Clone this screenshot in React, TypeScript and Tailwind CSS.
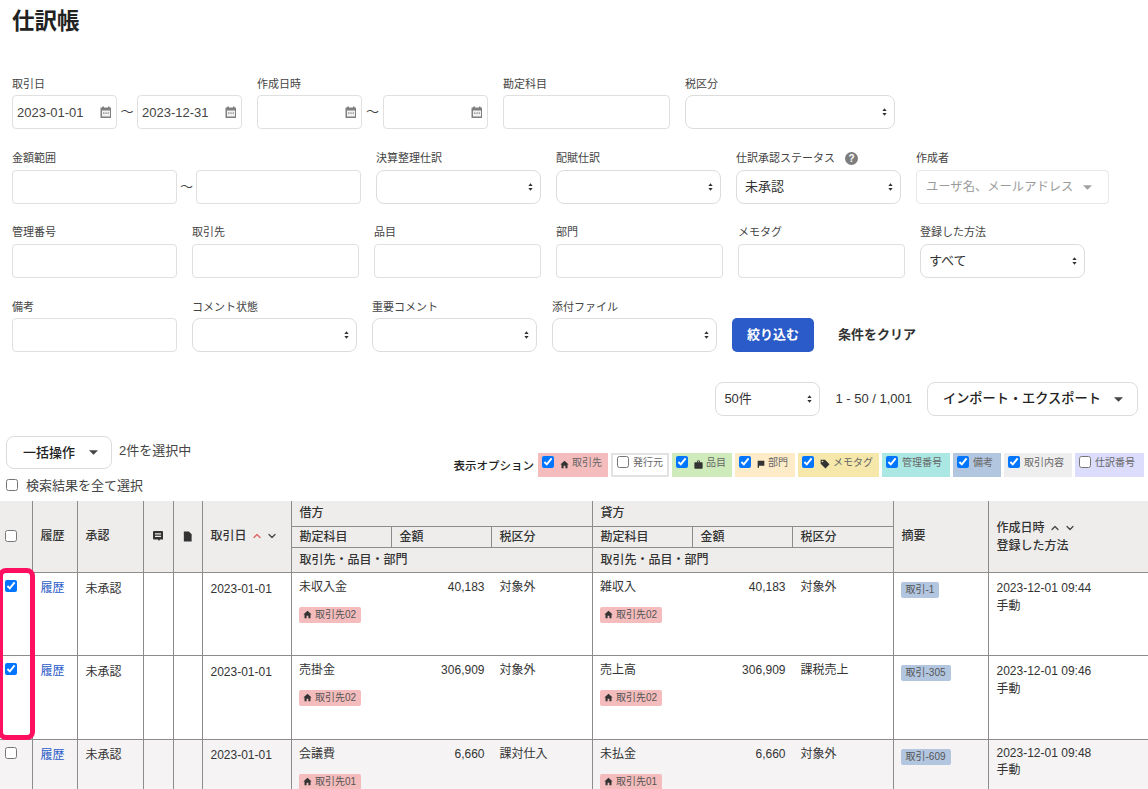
import React from "react";
import { ChevronDown, ChevronUp } from "lucide-react";

const Arrows = () => (
  <svg viewBox="0 0 6 10" className="absolute right-[8px] top-1/2 -translate-y-1/2 w-[5px] h-[9px] pointer-events-none">
    <path d="M3 0.5L5.6 3.8H0.4Z M3 9.5L0.4 6.2H5.6Z" fill="#333" />
  </svg>
);

const Caret = ({ c = "#444" }: { c?: string }) => (
  <svg viewBox="0 0 10 5" className="w-[9px] h-[5px] shrink-0"><path d="M0 0H10L5 5Z" fill={c} /></svg>
);

const Cal = () => (
  <svg viewBox="0 0 12 12" className="absolute right-[5px] top-1/2 -translate-y-1/2 w-[12px] h-[12px] pointer-events-none">
    <path d="M2.5 0.5h1.5v1h4v-1h1.5v1h1a.5.5 0 0 1 .5.5v9.5a.5.5 0 0 1-.5.5h-9.5a.5.5 0 0 1-.5-.5V2a.5.5 0 0 1 .5-.5h1z" fill="#7f7f7f" />
    <rect x="2" y="4.5" width="8" height="6" fill="#f1f1f1" />
    <rect x="3" y="6.5" width="1.4" height="1.2" fill="#7f7f7f" />
    <rect x="5.3" y="6.5" width="1.4" height="1.2" fill="#7f7f7f" />
    <rect x="7.6" y="6.5" width="1.4" height="1.2" fill="#7f7f7f" />
  </svg>
);

const Home = () => (
  <svg viewBox="0 0 12 12" className="w-[9px] h-[9px] shrink-0"><path d="M6 1L11.5 6H10V11H7.2V7.8H4.8V11H2V6H.5Z" fill="#333" /></svg>
);
const Bag = () => (
  <svg viewBox="0 0 12 12" className="w-[9px] h-[9px] shrink-0"><path d="M4 3V1.5A1 1 0 0 1 5 .5H7A1 1 0 0 1 8 1.5V3H10.5A1 1 0 0 1 11.5 4V10.5A1 1 0 0 1 10.5 11.5H1.5A1 1 0 0 1 .5 10.5V4A1 1 0 0 1 1.5 3ZM5 3H7V1.5H5Z" fill="#333" fillRule="evenodd" /></svg>
);
const Flag = () => (
  <svg viewBox="0 0 12 12" className="w-[8px] h-[8px] shrink-0"><path d="M1 1H11V8.5H3V11.5H1Z" fill="#333" /></svg>
);
const TagI = () => (
  <svg viewBox="0 0 12 12" className="w-[10px] h-[10px] shrink-0"><path d="M.8.8H6L11.4 6.4 6.6 11.4.8 5.8ZM3 2A1 1 0 1 0 3 4 1 1 0 0 0 3 2Z" fill="#333" fillRule="evenodd" /></svg>
);

const Label = ({ text, h }: { text: React.ReactNode; h: string }) => (
  <div className={`${h} text-[11px] leading-[16px] text-[#444] whitespace-nowrap flex items-start`}>{text}</div>
);

const Input = ({ w, value, date }: { w: string; value?: string; date?: boolean }) => (
  <div className={`relative ${w} h-[34px] shrink-0`}>
    <input
      readOnly
      value={value ?? ""}
      className="w-full h-full border border-[#e0e0e0] rounded-[4px] bg-white pl-[4px] text-[13px] text-[#444] outline-none"
    />
    {date && <Cal />}
  </div>
);

const Select = ({ w, value }: { w: string; value?: string }) => (
  <div className={`relative ${w} h-[34px] shrink-0`}>
    <select
      defaultValue={value ?? ""}
      className="appearance-none w-full h-full border border-[#dcdcdc] rounded-[8px] bg-white pl-[8px] text-[13px] text-[#333] outline-none"
    >
      <option value={value ?? ""}>{value ?? ""}</option>
    </select>
    <Arrows />
  </div>
);

const Tilde = ({ w }: { w: string }) => (
  <span className={`${w} shrink-0 text-center text-[13px] leading-[34px] text-[#444]`}>～</span>
);

const Field = ({ w, label, h, children }: { w: string; label: React.ReactNode; h: string; children: React.ReactNode }) => (
  <div className={`${w} shrink-0`}>
    <Label text={label} h={h} />
    <div className="flex items-start">{children}</div>
  </div>
);

const Chip = ({ bg, checked, icon, text, w }: { bg: string; checked: boolean; icon?: React.ReactNode; text: string; w: string }) => (
  <label className={`${bg} ${w} h-[24px] flex items-center pl-[4px] text-[10px] text-[#666] whitespace-nowrap`}>
    <input type="checkbox" readOnly checked={checked} className="w-[12px] h-[12px] -mt-[6px] mr-[4px] shrink-0" />
    {icon && <span className="mr-[3px] ml-[2px] -mt-[2px] flex">{icon}</span>}
    <span className="-mt-[6px]">{text}</span>
  </label>
);

const PartnerTag = ({ text }: { text: string }) => (
  <span className="inline-flex items-center gap-[3px] h-[16px] px-[4.5px] rounded-[2px] bg-[#f4bcbc] text-[10px] text-[#555] whitespace-nowrap">
    <Home />
    {text}
  </span>
);

const Side = ({ name, amount, tax, tag }: { name: string; amount: string; tax: string; tag: string }) => (
  <td colSpan={3} className="border-l border-t border-[#8c8c8c] align-top p-0">
    <div className="grid grid-cols-[100px_100px_1fr] pt-[6px] leading-[16px]">
      <span className="pl-[7.5px]">{name}</span>
      <span className="text-right pr-[7px]">{amount}</span>
      <span className="pl-[8px]">{tax}</span>
    </div>
    <div className="pl-[7px] mt-[12px] flex"><PartnerTag text={tag} /></div>
  </td>
);

type Row = {
  checked: boolean;
  bg: string;
  h: string;
  top: string;
  at2: string;
  d: [string, string, string, string];
  c: [string, string, string, string];
  memo: string;
  at: string;
};

const rows: Row[] = [
  { checked: true, bg: "bg-white", h: "h-[83px]", top: "pt-[8px]", at2: "pt-[6px] leading-[18px]", d: ["未収入金", "40,183", "対象外", "取引先02"], c: ["雑収入", "40,183", "対象外", "取引先02"], memo: "取引-1", at: "2023-12-01 09:44" },
  { checked: true, bg: "bg-white", h: "h-[84px]", top: "pt-[8px]", at2: "pt-[6px] leading-[18px]", d: ["売掛金", "306,909", "対象外", "取引先02"], c: ["売上高", "306,909", "課税売上", "取引先02"], memo: "取引-305", at: "2023-12-01 09:46" },
  { checked: false, bg: "bg-[#f5f3f4]", h: "h-[84px]", top: "pt-[7px]", at2: "pt-[5px] leading-[17px]", d: ["会議費", "6,660", "課対仕入", "取引先01"], c: ["未払金", "6,660", "対象外", "取引先01"], memo: "取引-609", at: "2023-12-01 09:48" },
];

const th = "border-l border-[#8c8c8c] font-medium text-left px-[8px] align-middle";

export default function App() {
  return (
    <div className="relative w-[1148px] h-[789px] overflow-hidden bg-white text-[12px] text-[#333] [font-family:'Liberation_Sans','Noto_Sans_CJK_JP',sans-serif]">
      <h1 className="pl-[12px] pt-[6px] h-[76px] text-[22.5px] leading-[32px] font-bold text-[#222]">仕訳帳</h1>

      <div className="flex pl-[12px]">
        <Field w="w-[245px]" h="h-[19px]" label="取引日">
          <Input w="w-[105px]" value="2023-01-01" date />
          <Tilde w="w-[20px]" />
          <Input w="w-[105px]" value="2023-12-31" date />
        </Field>
        <Field w="w-[246px]" h="h-[19px]" label="作成日時">
          <Input w="w-[105px]" date />
          <Tilde w="w-[21px]" />
          <Input w="w-[105px]" date />
        </Field>
        <Field w="w-[182px]" h="h-[19px]" label="勘定科目"><Input w="w-[167px]" /></Field>
        <Field w="w-[210px]" h="h-[19px]" label="税区分"><Select w="w-[210px]" /></Field>
      </div>

      <div className="flex pl-[12px] mt-[21px]">
        <Field w="w-[364px]" h="h-[20px]" label="金額範囲">
          <Input w="w-[165px]" />
          <Tilde w="w-[19px]" />
          <Input w="w-[165px]" />
        </Field>
        <Field w="w-[180px]" h="h-[20px]" label="決算整理仕訳"><Select w="w-[165px]" /></Field>
        <Field w="w-[180px]" h="h-[20px]" label="配賦仕訳"><Select w="w-[165px]" /></Field>
        <Field
          w="w-[180px]"
          h="h-[20px]"
          label={
            <span className="flex items-center gap-[10px]">
              仕訳承認ステータス
              <span className="w-[13px] h-[13px] rounded-full bg-[#7d7d7d] text-white text-[10px] leading-[13px] font-bold text-center">?</span>
            </span>
          }
        >
          <Select w="w-[165px]" value="未承認" />
        </Field>
        <Field w="w-[193px]" h="h-[20px]" label="作成者">
          <div className="w-[193px] h-[34px] border border-[#e8e8e8] rounded-[4px] flex items-center pl-[9px] gap-[10px] text-[12.3px] text-[#9a9a9a] whitespace-nowrap">
            ユーザ名、メールアドレス
            <Caret c="#a0a0a0" />
          </div>
        </Field>
      </div>

      <div className="flex pl-[12px] mt-[19px]">
        <Field w="w-[180px]" h="h-[21px] pt-[1px]" label="管理番号"><Input w="w-[165px]" /></Field>
        <Field w="w-[182px]" h="h-[21px] pt-[1px]" label="取引先"><Input w="w-[167px]" /></Field>
        <Field w="w-[182px]" h="h-[21px] pt-[1px]" label="品目"><Input w="w-[167px]" /></Field>
        <Field w="w-[182px]" h="h-[21px] pt-[1px]" label="部門"><Input w="w-[167px]" /></Field>
        <Field w="w-[182px]" h="h-[21px] pt-[1px]" label="メモタグ"><Input w="w-[167px]" /></Field>
        <Field w="w-[165px]" h="h-[21px] pt-[1px]" label="登録した方法"><Select w="w-[165px]" value="すべて" /></Field>
      </div>

      <div className="flex pl-[12px] mt-[21px] items-end">
        <Field w="w-[180px]" h="h-[19px]" label="備考"><Input w="w-[165px]" /></Field>
        <Field w="w-[180px]" h="h-[19px]" label="コメント状態"><Select w="w-[165px]" /></Field>
        <Field w="w-[180px]" h="h-[19px]" label="重要コメント"><Select w="w-[165px]" /></Field>
        <Field w="w-[180px]" h="h-[19px]" label="添付ファイル"><Select w="w-[165px]" /></Field>
        <button className="w-[82px] h-[34px] rounded-[5px] bg-[#2a5bc8] text-white text-[13px] font-bold">絞り込む</button>
        <button className="ml-[24px] h-[34px] text-[13px] font-bold text-[#333]">条件をクリア</button>
      </div>

      <div className="flex justify-end items-center mt-[30px] pr-[10px]">
        <Select w="w-[105px]" value="50件" />
        <span className="ml-[15px] mr-[15px] text-[13px] text-[#333]">1 - 50 / 1,001</span>
        <button className="w-[211px] h-[34px] border border-[#dcdcdc] rounded-[8px] bg-white flex items-center pl-[15px] gap-[13px] text-[13.2px] font-medium text-[#222] whitespace-nowrap">
          インポート・エクスポート
          <Caret />
        </button>
      </div>

      <div className="flex justify-between h-[65px] mt-[20px] pl-[6px] pr-[4px]">
        <div>
          <div className="flex items-center">
            <button className="w-[106px] h-[33px] border border-[#dcdcdc] rounded-[8px] bg-white flex items-center pl-[16px] gap-[14px] text-[13px] font-medium text-[#222]">
              一括操作
              <Caret />
            </button>
            <span className="ml-[7px] -mt-[3px] text-[13px] text-[#444]">2件を選択中</span>
          </div>
          <label className="flex items-center mt-[9px] h-[16px] text-[13px] text-[#444]">
            <input type="checkbox" readOnly className="w-[12px] h-[12px] mr-[8px] -mt-[3px]" />
            検索結果を全て選択
          </label>
        </div>
        <div className="flex items-center h-[24px] mt-[17px] gap-[3px]">
          <span className="text-[11.5px] font-medium text-[#222] mr-[1px] mt-[3px] whitespace-nowrap">表示オプション</span>
          <Chip bg="bg-[#f4bcbc]" w="w-[70px]" checked icon={<Home />} text="取引先" />
          <Chip bg="bg-white border-2 border-[#e2e2e2]" w="w-[58px]" checked={false} text="発行元" />
          <Chip bg="bg-[#d0ebbb]" w="w-[60px]" checked icon={<Bag />} text="品目" />
          <Chip bg="bg-[#feebc8]" w="w-[60px]" checked icon={<Flag />} text="部門" />
          <Chip bg="bg-[#f5e8aa]" w="w-[81px]" checked icon={<TagI />} text="メモタグ" />
          <Chip bg="bg-[#abe7e3]" w="w-[68px]" checked text="管理番号" />
          <Chip bg="bg-[#b3c6e0]" w="w-[48px]" checked text="備考" />
          <Chip bg="bg-[#eeeeee]" w="w-[68px]" checked text="取引内容" />
          <Chip bg="bg-[#dcdcfc]" w="w-[69px]" checked={false} text="仕訳番号" />
        </div>
      </div>

      <table className="table-fixed w-[1148px] text-[12px] border-collapse">
        <colgroup>
          <col className="w-[32px]" />
          <col className="w-[45px]" />
          <col className="w-[66px]" />
          <col className="w-[30px]" />
          <col className="w-[29px]" />
          <col className="w-[89px]" />
          <col className="w-[100px]" />
          <col className="w-[100px]" />
          <col className="w-[101px]" />
          <col className="w-[100px]" />
          <col className="w-[100px]" />
          <col className="w-[101px]" />
          <col className="w-[95px]" />
          <col className="w-[160px]" />
        </colgroup>
        <thead className="bg-[#eeedeb] text-[#333]">
          <tr className="h-[25px]">
            <th rowSpan={3} className="font-normal text-left pl-[5px] align-middle">
              <input type="checkbox" readOnly className="block w-[12px] h-[12px]" />
            </th>
            <th rowSpan={3} className={th}>履歴</th>
            <th rowSpan={3} className={th}>承認</th>
            <th rowSpan={3} className={th}>
              <svg viewBox="0 0 12 12" className="w-[12px] h-[12px]">
                <path d="M2 1H10A1 1 0 0 1 11 2V9.5H8L7 11 6 9.5H2A1 1 0 0 1 1 8.5V2A1 1 0 0 1 2 1ZM3 3.2V4.5H9V3.2ZM3 5.8V7.1H9V5.8Z" fill="#333" fillRule="evenodd" />
              </svg>
            </th>
            <th rowSpan={3} className={th}>
              <svg viewBox="0 0 12 12" className="w-[11px] h-[11px]">
                <path d="M2 .5H7.5L10.5 3.5V11.5H2Z" fill="#333" />
              </svg>
            </th>
            <th rowSpan={3} className={th}>
              <span className="flex items-center whitespace-nowrap">
                取引日
                <ChevronUp size={12} strokeWidth={2.5} className="ml-[4px] text-[#e0605f]" />
                <ChevronDown size={12} strokeWidth={2.5} className="ml-[3px] text-[#444]" />
              </span>
            </th>
            <th colSpan={3} className={th}>借方</th>
            <th colSpan={3} className={th}>貸方</th>
            <th rowSpan={3} className={th}>摘要</th>
            <th rowSpan={3} className={`${th} leading-[18px] pt-[2px]`}>
              <span className="flex items-center">
                作成日時
                <ChevronUp size={12} strokeWidth={2.5} className="ml-[4px] text-[#444]" />
                <ChevronDown size={12} strokeWidth={2.5} className="ml-[3px] text-[#444]" />
              </span>
              登録した方法
            </th>
          </tr>
          <tr className="h-[21px]">
            {["勘定科目", "金額", "税区分", "勘定科目", "金額", "税区分"].map((t, i) => (
              <th key={i} className={`${th} border-t`}>{t}</th>
            ))}
          </tr>
          <tr className="h-[25px]">
            <th colSpan={3} className={`${th} border-t`}>取引先・品目・部門</th>
            <th colSpan={3} className={`${th} border-t`}>取引先・品目・部門</th>
          </tr>
        </thead>
        <tbody>
          {rows.map((r, i) => (
            <tr key={i} className={`${r.bg} ${r.h}`}>
              <td className="border-t border-[#8c8c8c] align-top pl-[5px] pt-[7px]">
                <input type="checkbox" readOnly checked={r.checked} className="block w-[12px] h-[12px]" />
              </td>
              <td className="border-l border-t border-[#8c8c8c] align-top pl-[8px] pt-[7px] leading-[16px] text-[#2a5bc8]">履歴</td>
              <td className={`border-l border-t border-[#8c8c8c] align-top pl-[8px] ${r.top} leading-[16px]`}>未承認</td>
              <td className="border-l border-t border-[#8c8c8c]"></td>
              <td className="border-l border-t border-[#8c8c8c]"></td>
              <td className={`border-l border-t border-[#8c8c8c] align-top pl-[8px] ${r.top} leading-[16px]`}>2023-01-01</td>
              <Side name={r.d[0]} amount={r.d[1]} tax={r.d[2]} tag={r.d[3]} />
              <Side name={r.c[0]} amount={r.c[1]} tax={r.c[2]} tag={r.c[3]} />
              <td className="border-l border-t border-[#8c8c8c] align-top pl-[7px] pt-[9px]">
                <span className="block w-fit h-[16px] px-[5px] rounded-[2px] bg-[#b3c6e0] text-[10px] leading-[16px] text-[#555]">{r.memo}</span>
              </td>
              <td className={`border-l border-t border-[#8c8c8c] align-top pl-[8px] ${r.at2}`}>
                {r.at}
                <br />
                手動
              </td>
            </tr>
          ))}
        </tbody>
      </table>

      <div className="absolute -left-[2px] top-[568px] w-[37px] h-[172px] border-[5px] border-[#ff0f5f] rounded-[8px] pointer-events-none" />
    </div>
  );
}
